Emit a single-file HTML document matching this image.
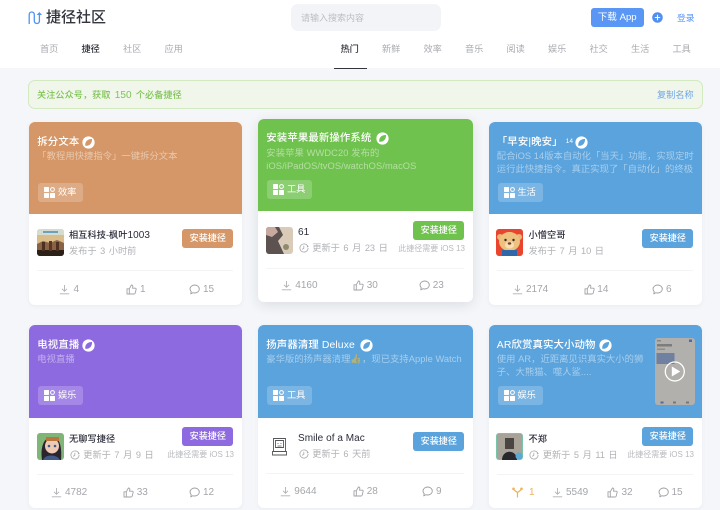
<!DOCTYPE html>
<html lang="zh"><head><meta charset="utf-8"><title>捷径社区</title>
<style>
*{box-sizing:border-box;margin:0;padding:0}
html,body{width:720px;height:510px;overflow:hidden;background:#f4f6f9}
body{font-family:"Liberation Sans","Noto Sans CJK SC",sans-serif;position:relative;color:#2b2d3a}
.t{position:absolute;white-space:nowrap;line-height:14px}
.top{position:absolute;left:0;top:0;width:720px;height:67.500px;background:#fff}
.nav{position:absolute;top:42px;font-size:9.200px;line-height:14px;color:#a9abb0;white-space:nowrap}
.card{position:absolute;background:#fff;border-radius:6px;box-shadow:0 1px 5px rgba(40,50,70,.05);overflow:hidden}
.card.hi{box-shadow:0 3px 12px rgba(40,50,70,.12)}
.hd{position:absolute;left:0;top:0;width:100%}
.title{position:absolute;left:8.300px;top:13.500px;font-size:10.400px;letter-spacing:.12px;line-height:14px;color:#fff;font-weight:500;white-space:nowrap}
.ck{position:absolute;top:13.500px;width:13px;height:13px}
.desc{position:absolute;left:8.300px;top:28px;font-size:9.300px;letter-spacing:.05px;line-height:13.400px;color:rgba(255,255,255,.47);white-space:nowrap}
.tag{position:absolute;left:9px;width:45px;height:19px;background:rgba(255,255,255,.2);border-radius:3px;color:#fff;font-size:9.200px;line-height:19px;padding-left:20px;white-space:nowrap}
.tag svg{position:absolute;left:6px;top:4px;width:11px;height:11px}
.av{position:absolute;left:7.700px;width:27px;height:27px;border-radius:3px;overflow:hidden}
.name{position:absolute;left:40px;font-size:9.200px;letter-spacing:.05px;line-height:14px;color:#2b2d3a;font-weight:500;white-space:nowrap}
.name b{font-weight:500;font-size:10px}
.sub{position:absolute;left:40px;font-size:9.200px;word-spacing:1px;line-height:14px;color:#b0b2b6;white-space:nowrap}
.sub.i{left:54.300px}
.clk{position:absolute;left:40.500px;width:10px;height:10px}
.btn{position:absolute;right:8.700px;width:51px;height:19px;border-radius:3px;color:#fff;font-size:9.100px;line-height:19px;text-align:center;font-weight:500}
.req{position:absolute;right:8px;font-size:8px;line-height:10px;color:#b8babe;white-space:nowrap}
.ln{position:absolute;left:8px;right:9px;height:1px;background:#f3f4f6}
.st{position:absolute;font-size:10px;line-height:12px;color:#a4a6aa;white-space:nowrap}
.ic{position:absolute;width:11px;height:11px}
.blurwrap{position:absolute;left:0;top:0;width:720px;height:510px;filter:blur(.35px)}
</style></head><body>
<svg width="0" height="0" style="position:absolute"><defs>
<symbol id="ck" viewBox="0 0 14 14"><circle cx="7" cy="7" r="6.600" fill="#fff"/><path d="M3.500 10.500C3 6 6 3 10.800 3.200 11 8 8 11 3.500 10.500Z" fill="currentColor"/></symbol>
<symbol id="tg" viewBox="0 0 11 11"><rect x="0" y="0" width="5" height="5" rx=".6" fill="#fff"/><circle cx="8.500" cy="2.500" r="1.900" fill="none" stroke="#fff" stroke-width="1"/><rect x="0" y="6" width="5" height="5" rx=".6" fill="#fff"/><rect x="6" y="6" width="5" height="5" rx=".6" fill="#fff"/></symbol>
<symbol id="dl" viewBox="0 0 11 11"><path d="M5.500 1V7M3 4.800 5.500 7.300 8 4.800M.8 9.800H10.200" fill="none" stroke="#aeb0b4" stroke-width=".9"/></symbol>
<symbol id="lk" viewBox="0 0 11 11"><path d="M3.300 4.800H1V10H3.300ZM3.300 4.800 5.400 1C6.500 1 7 1.800 6.800 2.800L6.500 4.200H9.300C10 4.200 10.300 4.800 10.100 5.500L9.200 9.100C9 9.700 8.700 10 8 10H3.300" fill="none" stroke="#a0a2a6" stroke-width=".9" stroke-linejoin="round"/></symbol>
<symbol id="cm" viewBox="0 0 11 11"><path d="M5.700 1C8.300 1 10.300 2.800 10.300 5S8.300 9 5.700 9C5 9 4.400 8.900 3.800 8.700L1.800 9.900 2.200 7.600C1.400 6.900 1 6 1 5 1 2.800 3.100 1 5.700 1Z" fill="none" stroke="#9a9ca0" stroke-width=".9" stroke-linejoin="round"/></symbol>
<symbol id="cl" viewBox="0 0 11 11"><path d="M9.600 3.600A4.500 4.500 0 1 0 10 5.500" fill="none" stroke="#a8aaae" stroke-width=".9"/><path d="M5.300 3V5.800L3.500 7" fill="none" stroke="#a8aaae" stroke-width=".9"/><path d="M8.500 5 10.800 4.200 9.200 2.300Z" fill="#a8aaae"/></symbol>
</defs></svg>
<div class="blurwrap">
<div class="top"></div>
<svg style="position:absolute;left:28px;top:10px" width="15" height="15" viewBox="0 0 15 15"><path d="M1.200 14V4.500C1.200 1.200 6.300 1.200 6.300 4.500V10.500C6.300 14.300 10.800 14.300 11.400 11.500" fill="none" stroke="#4f94f2" stroke-width="1.300"/><path d="M11.400 12V3" fill="none" stroke="#4f94f2" stroke-width="1.300"/><path d="M8.700 5 11.400 2 14 5Z" fill="#4f94f2"/></svg>
<div class="t" style="left:46px;top:10px;font-size:15px;line-height:16px;font-weight:500;color:#33353f">捷径社区</div>
<div style="position:absolute;left:291px;top:4px;width:150px;height:27px;border-radius:7px;background:#f3f4f7"></div>
<div class="t" style="left:301px;top:11px;font-size:9px;color:#bcbec3">请输入搜索内容</div>
<div style="position:absolute;left:590.700px;top:8px;width:53px;height:19px;border-radius:3px;background:#5a96f4;color:#fff;font-size:9.600px;line-height:19px;text-align:center">下载 App</div>
<svg style="position:absolute;left:652px;top:12px" width="11" height="11" viewBox="0 0 11 11"><circle cx="5.500" cy="5.500" r="5.300" fill="#4f8ff0"/><path d="M2.800 5.500H8.200M5.500 2.800V8.200" stroke="#fff" stroke-width="1.100"/></svg>
<div class="t" style="left:677px;top:11px;font-size:8.800px;color:#5a96f4">登录</div>
<div class="nav" style="left:40px">首页</div>
<div class="nav" style="left:81.500px;color:#2e3038;font-weight:500">捷径</div>
<div class="nav" style="left:123px">社区</div>
<div class="nav" style="left:164.500px">应用</div>
<div class="nav" style="left:340.500px;color:#2e3038;font-weight:500">热门</div>
<div style="position:absolute;left:334px;top:68px;width:33px;height:1px;background:#33353c"></div>
<div class="nav" style="left:382px">新鲜</div>
<div class="nav" style="left:423.500px">效率</div>
<div class="nav" style="left:465px">音乐</div>
<div class="nav" style="left:506.500px">阅读</div>
<div class="nav" style="left:548px">娱乐</div>
<div class="nav" style="left:589.500px">社交</div>
<div class="nav" style="left:631px">生活</div>
<div class="nav" style="left:672.500px">工具</div>

<div style="position:absolute;left:28.300px;top:80px;width:675px;height:29px;border-radius:7px;background:#f0f6ea;border:1px solid #d3e9bf"></div>
<div class="t" style="left:37px;top:88px;font-size:9.100px;letter-spacing:.1px;word-spacing:1.500px;color:#7dc353;font-weight:500">关注公众号，获取 <span style="font-size:10px">150</span> 个必备捷径</div>
<div class="t" style="left:657px;top:88px;font-size:9.200px;color:#6ea5ec">复制名称</div>

<!-- card 1 -->
<div class="card" style="left:29px;top:122px;width:213px;height:183px">
<div class="hd" style="height:92px;background:#d59767"></div>
<div class="title">拆分文本</div><svg class="ck" style="left:53.300px;color:#d59767"><use href="#ck"/></svg>
<div class="desc">「教程用快捷指令」一键拆分文本</div>
<div class="tag" style="top:61px"><svg><use href="#tg"/></svg>效率</div>
<div class="av" style="top:107px"><svg width="27" height="27" viewBox="0 0 27 27"><rect width="27" height="27" fill="#d9bd8a"/><rect width="27" height="6" fill="#d4dccf"/><rect x="6" y="2" width="15" height="2" fill="#6f9fc0"/><path d="M0 15 6 12 13 14 20 11 27 14V27H0Z" fill="#8a6344"/><rect y="21" width="27" height="6" fill="#2c2119"/><rect x="5" y="13" width="3" height="9" fill="#4d3024"/><rect x="12" y="12" width="3" height="10" fill="#5b3526"/><rect x="19" y="13" width="3" height="9" fill="#4d3024"/></svg></div>
<div class="name" style="top:106px">相互科技-枫叶<b>1003</b></div>
<div class="sub" style="top:122px">发布于 3 小时前</div>
<div class="btn" style="top:107.300px;background:#d59767">安装捷径</div>
<div class="ln" style="top:148.300px"></div>
<svg class="ic" style="left:30px;top:162px"><use href="#dl"/></svg><div class="st" style="left:44.500px;top:162px">4</div>
<svg class="ic" style="left:97px;top:162px"><use href="#lk"/></svg><div class="st" style="left:111px;top:162px">1</div>
<svg class="ic" style="left:159.500px;top:162px"><use href="#cm"/></svg><div class="st" style="left:174px;top:162px">15</div>
</div>

<!-- card 2 -->
<div class="card hi" style="left:258px;top:118.500px;width:215px;height:183px">
<div class="hd" style="height:92.500px;background:#70c24f"></div>
<div class="title" style="top:13px">安装苹果最新操作系统</div><svg class="ck" style="left:117.700px;top:13px;color:#70c24f"><use href="#ck"/></svg>
<div class="desc" style="letter-spacing:.1px">安装苹果 WWDC20 发布的<br>iOS/iPadOS/tvOS/watchOS/macOS</div>
<div class="tag" style="top:61px"><svg><use href="#tg"/></svg>工具</div>
<div class="av" style="top:108px"><svg width="27" height="27" viewBox="0 0 27 27"><rect width="27" height="27" fill="#d9cbb8"/><path d="M0 0H13L17 8 12 14 18 27H0Z" fill="#5c5250"/><path d="M0 0H9L12 5 6 10 0 8Z" fill="#c7a9a0"/><circle cx="20" cy="20" r="3" fill="#8e8a6f"/></svg></div>
<div class="name" style="top:106.200px"><b>61</b></div>
<svg class="clk" style="top:124.500px"><use href="#cl"/></svg><div class="sub i" style="top:122.500px">更新于 6 月 23 日</div>
<div class="btn" style="top:102.300px;background:#70c24f">安装捷径</div>
<div class="req" style="top:125px">此捷径需要 iOS 13</div>
<div class="ln" style="top:149.800px"></div>
<svg class="ic" style="left:22.500px;top:161.500px"><use href="#dl"/></svg><div class="st" style="left:37.300px;top:161.500px">4160</div>
<svg class="ic" style="left:94.500px;top:161.500px"><use href="#lk"/></svg><div class="st" style="left:108.700px;top:161.500px">30</div>
<svg class="ic" style="left:160.500px;top:161.500px"><use href="#cm"/></svg><div class="st" style="left:174.700px;top:161.500px">23</div>
</div>

<!-- card 3 -->
<div class="card" style="left:488.500px;top:122px;width:213.500px;height:183px">
<div class="hd" style="height:92px;background:#5aa3dd"></div>
<div class="title">「早安|晚安」<sup style="font-size:6.500px;margin-left:3px;position:relative;top:-2px;vertical-align:baseline">14</sup></div><svg class="ck" style="left:86px;color:#5aa3dd"><use href="#ck"/></svg>
<div class="desc">配合iOS 14版本自动化「当天」功能，实现定时<br>运行此快捷指令。真正实现了「自动化」的终极</div>
<div class="tag" style="top:61px"><svg><use href="#tg"/></svg>生活</div>
<div class="av" style="top:107px"><svg width="27" height="27" viewBox="0 0 27 27"><rect width="27" height="27" fill="#e8442e"/><circle cx="4" cy="8" r="3" fill="#e9b974"/><circle cx="23" cy="8" r="3" fill="#e9b974"/><ellipse cx="13.500" cy="12.500" rx="10.500" ry="9.500" fill="#edc27f"/><rect x="6" y="21" width="15" height="6" fill="#2f67a8"/><ellipse cx="13.500" cy="16" rx="4.500" ry="3.500" fill="#f6e0b3"/><circle cx="9.500" cy="11" r="1.200" fill="#3a2a22"/><circle cx="17.500" cy="11" r="1.200" fill="#3a2a22"/><ellipse cx="13.500" cy="14.500" rx="1.800" ry="1.200" fill="#7a4428"/></svg></div>
<div class="name" style="top:106px">小憎空哥</div>
<div class="sub" style="top:122px">发布于 7 月 10 日</div>
<div class="btn" style="top:107.300px;background:#5aa3dd">安装捷径</div>
<div class="ln" style="top:148.300px"></div>
<svg class="ic" style="left:23.500px;top:162px"><use href="#dl"/></svg><div class="st" style="left:37.500px;top:162px">2174</div>
<svg class="ic" style="left:95px;top:162px"><use href="#lk"/></svg><div class="st" style="left:108.800px;top:162px">14</div>
<svg class="ic" style="left:163px;top:162px"><use href="#cm"/></svg><div class="st" style="left:177.500px;top:162px">6</div>
</div>

<!-- card 4 -->
<div class="card" style="left:29px;top:325px;width:213px;height:183px">
<div class="hd" style="height:93px;background:#8e6ae0"></div>
<div class="title">电视直播</div><svg class="ck" style="left:53.300px;color:#8e6ae0"><use href="#ck"/></svg>
<div class="desc">电视直播</div>
<div class="tag" style="top:61px"><svg><use href="#tg"/></svg>娱乐</div>
<div class="av" style="top:107.700px"><svg width="27" height="27" viewBox="0 0 27 27"><rect width="27" height="27" fill="#7fb678"/><path d="M5 27C3 14 7 4 15 4S25 14 24 27Z" fill="#2b2530"/><ellipse cx="15" cy="13" rx="7" ry="7.500" fill="#eec9b4"/><path d="M9 4H22V8H9Z" fill="#b6763d"/><path d="M6 27C8 21 20 21 23 27Z" fill="#3f5a85"/><circle cx="12" cy="13" r="1.300" fill="#3b5c8c"/><circle cx="18" cy="13" r="1.300" fill="#3b5c8c"/></svg></div>
<div class="name" style="top:107px">无聊写捷径</div>
<svg class="clk" style="top:124.500px"><use href="#cl"/></svg><div class="sub i" style="top:122.500px">更新于 7 月 9 日</div>
<div class="btn" style="top:102px;background:#8e6ae0">安装捷径</div>
<div class="req" style="top:125.300px">此捷径需要 iOS 13</div>
<div class="ln" style="top:149px"></div>
<svg class="ic" style="left:21.500px;top:161.500px"><use href="#dl"/></svg><div class="st" style="left:36px;top:161.500px">4782</div>
<svg class="ic" style="left:93.500px;top:161.500px"><use href="#lk"/></svg><div class="st" style="left:107.700px;top:161.500px">33</div>
<svg class="ic" style="left:160px;top:161.500px"><use href="#cm"/></svg><div class="st" style="left:174px;top:161.500px">12</div>
</div>

<!-- card 5 -->
<div class="card" style="left:258px;top:325px;width:215px;height:183px">
<div class="hd" style="height:93px;background:#5aa3dd"></div>
<div class="title">扬声器清理 Deluxe</div><svg class="ck" style="left:102.300px;color:#5aa3dd"><use href="#ck"/></svg>
<div class="desc">豪华版的扬声器清理👍，现已支持Apple Watch</div>
<div class="tag" style="top:61px"><svg><use href="#tg"/></svg>工具</div>
<svg style="position:absolute;left:8px;top:108px" width="27" height="27" viewBox="0 0 27 27"><rect width="27" height="27" fill="#fff"/><path d="M7.500 5.500H19.500V18.500H7.500ZM9.500 7.500H17.500V14.500H9.500ZM6.500 18.500H20.500V22H6.500Z" fill="none" stroke="#55565a" stroke-width=".9"/><path d="M12 10V11M15 10V11M11.500 13H15.500" stroke="#55565a" stroke-width=".8"/></svg>
<div class="name" style="top:105.700px"><b>Smile of a Mac</b></div>
<svg class="clk" style="top:123.500px"><use href="#cl"/></svg><div class="sub i" style="top:121.500px">更新于 6 天前</div>
<div class="btn" style="top:107.300px;background:#5aa3dd">安装捷径</div>
<div class="ln" style="top:148.300px"></div>
<svg class="ic" style="left:22px;top:160.500px"><use href="#dl"/></svg><div class="st" style="left:36.300px;top:160.500px">9644</div>
<svg class="ic" style="left:94.500px;top:160.500px"><use href="#lk"/></svg><div class="st" style="left:108.700px;top:160.500px">28</div>
<svg class="ic" style="left:163.500px;top:160.500px"><use href="#cm"/></svg><div class="st" style="left:178px;top:160.500px">9</div>
</div>

<!-- card 6 -->
<div class="card" style="left:488.500px;top:325px;width:213.500px;height:183px">
<div class="hd" style="height:93px;background:#5aa3dd"></div>
<div class="title">AR欣赏真实大小动物</div><svg class="ck" style="left:110px;color:#5aa3dd"><use href="#ck"/></svg>
<div class="desc">使用 AR，近距离见识真实大小的狮<br>子、大熊猫、噬人鲨....</div>
<div class="tag" style="top:61px"><svg><use href="#tg"/></svg>娱乐</div>
<svg style="position:absolute;left:166.200px;top:13.300px" width="40" height="67" viewBox="0 0 40 67"><rect width="40" height="67" rx="3" fill="#b1b0ad"/><rect x="34" y="1.500" width="3" height="2.500" fill="#4d6ca0"/><rect x="2" y="2" width="4" height="1.500" fill="#888"/><rect x="2" y="6" width="15" height="2.500" fill="#7d7d7d"/><rect x="2" y="10.500" width="8" height="1.500" fill="#8e8e8e"/><rect x="1.500" y="15" width="18" height="11" fill="#6f80a0"/><rect x="5.500" y="63.500" width="3" height="2" fill="#4d6ca0"/><rect x="18" y="63.500" width="3" height="2" fill="#777"/><rect x="31" y="63.500" width="3" height="2" fill="#777"/><circle cx="19.800" cy="33.500" r="9.500" fill="none" stroke="#fff" stroke-width="1.300"/><path d="M16.800 28.500V38.500L25.300 33.500Z" fill="#fff"/></svg>
<div class="av" style="top:107.700px"><svg width="27" height="27" viewBox="0 0 27 27"><rect width="27" height="27" fill="#7bc2ab"/><rect x="1" y="1" width="25" height="25" fill="#a8a299"/><path d="M6 27C6 16 21 16 21 27Z" fill="#28272b"/><rect x="9" y="5" width="9" height="11" fill="#4a4442"/><circle cx="23" cy="23" r="3.500" fill="#5aa9d6"/></svg></div>
<div class="name" style="top:107px">不郑</div>
<svg class="clk" style="top:124.500px"><use href="#cl"/></svg><div class="sub i" style="top:122.500px">更新于 5 月 11 日</div>
<div class="btn" style="top:102px;background:#5aa3dd">安装捷径</div>
<div class="req" style="top:125.300px">此捷径需要 iOS 13</div>
<div class="ln" style="top:149px"></div>
<svg class="ic" style="left:23px;top:161.500px" viewBox="0 0 11 11"><path d="M5.500 10.500V5.500M5.500 5.500 1.500 2.500M5.500 5.500 9.500 2.500" fill="none" stroke="#efb15a" stroke-width="1.200"/><circle cx="1.500" cy="1.800" r="1.300" fill="#efb15a"/><circle cx="9.500" cy="1.800" r="1.300" fill="#efb15a"/></svg><div class="st" style="left:40.500px;top:161.500px;color:#efb15a">1</div>
<svg class="ic" style="left:63px;top:161.500px"><use href="#dl"/></svg><div class="st" style="left:77.500px;top:161.500px">5549</div>
<svg class="ic" style="left:118.700px;top:161.500px"><use href="#lk"/></svg><div class="st" style="left:133px;top:161.500px">32</div>
<svg class="ic" style="left:169px;top:161.500px"><use href="#cm"/></svg><div class="st" style="left:183px;top:161.500px">15</div>
</div>
</div>
</body></html>
